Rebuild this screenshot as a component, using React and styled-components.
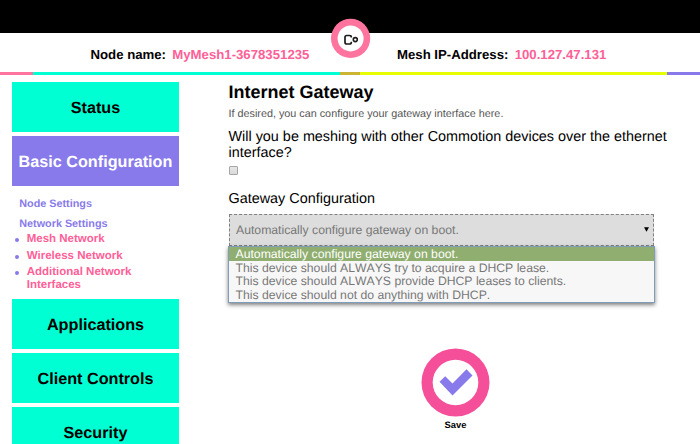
import React from "react";
import styled, { createGlobalStyle } from "styled-components";

const teal = "#00ffd2";
const violet = "#887aeb";
const pink = "#ff6097";

const GlobalStyle = createGlobalStyle`
  * { box-sizing: border-box; }
  body {
    margin: 0;
    background: #fff;
    color: #000;
    font-family: "Liberation Sans", Arial, sans-serif;
    text-rendering: geometricPrecision;
    font-kerning: none;
  }
`;

const Page = styled.div`
  width: 700px;
  height: 444px;
  overflow: hidden;
  display: flex;
  flex-direction: column;
`;

const Header = styled.header`
  position: relative;
  flex: none;
  height: 72px;
  border-top: 33px solid #000;
  display: flex;
`;

const Logo = styled.svg`
  position: absolute;
  left: 330px;
  top: -15px;
`;

const Fact = styled.div`
  width: ${(p) => p.$width}px;
  padding: 14px 0 0 ${(p) => p.$indent}px;
  display: flex;
  gap: 6.3px;
  font-size: 13.2px;
  line-height: 16px;
  font-weight: bold;
  white-space: nowrap;
`;

const FactValue = styled.span`
  color: ${pink};
`;

const Stripe = styled.div`
  flex: none;
  height: 3px;
  display: grid;
  grid-template-columns: 33.3px 306.4px 20.3px 307px 1fr;
`;

const Band = styled.div`
  background: ${(p) => p.$color};
`;

const Columns = styled.div`
  flex: 1;
  min-height: 0;
  display: flex;
  align-items: flex-start;
  padding: 7px 0 0 12px;
`;

const Menu = styled.nav`
  width: 167px;
  display: flex;
  flex-direction: column;
  gap: 4px;
`;

const MenuButton = styled.a`
  height: 50px;
  display: flex;
  align-items: center;
  justify-content: center;
  padding-top: 3px;
  background: ${(p) => (p.$active ? violet : teal)};
  color: ${(p) => (p.$active ? "#fff" : "#000")};
  font-size: 16.2px;
  font-weight: bold;
  white-space: nowrap;
`;

const SubMenu = styled.div`
  height: 105px;
  padding: 8px 0 0 7.3px;
  display: flex;
  flex-direction: column;
  color: ${violet};
  font-weight: bold;
`;

const SubLink = styled.a`
  font-size: 10.8px;
  line-height: 12px;
  margin-bottom: ${(p) => p.$gap || 0}px;
`;

const SubList = styled.ul`
  list-style: none;
  margin: 3px 0 0 -4.3px;
  padding: 0;
  font-size: 11.5px;
  line-height: 13.4px;
`;

const SubItem = styled.li`
  display: flex;
  gap: 7.7px;
  margin-bottom: 3.1px;
  color: ${pink};

  &::before {
    content: "";
    flex: none;
    width: 4px;
    height: 4px;
    margin-top: 5px;
    border-radius: 50%;
    background: ${violet};
  }
`;

const Content = styled.main`
  width: 425px;
  margin-left: 49.5px;
  display: flex;
  flex-direction: column;
`;

const Title = styled.h1`
  margin: 0;
  font-size: 18px;
  line-height: 20px;
`;

const Description = styled.p`
  margin: 5px 0 0;
  font-size: 10.8px;
  line-height: 14px;
  color: #555;
`;

const Label = styled.label`
  margin-top: ${(p) => p.$top}px;
  width: 445px;
  font-size: 14.4px;
  line-height: 16px;
`;

const CheckBox = styled.span`
  width: 9px;
  height: 9px;
  margin-top: 5px;
  border: 1px solid #a6a6a6;
  border-radius: 1px;
  background: linear-gradient(#e6e6e6, #dadada);
`;

const Select = styled.div`
  height: 32px;
  margin-top: 7px;
  padding: 0 4px 1px 6.5px;
  display: flex;
  align-items: center;
  justify-content: space-between;
  border: 1px dashed #808080;
  background: #ddd;
  color: #777;
  font-size: 12.22px;
`;

const Options = styled.div`
  height: 57px;
  width: 427px;
  margin-left: -0.5px;
  border: 1px solid #7f9db9;
  background: #f7f7f7;
  box-shadow: 0 2px 4px rgba(0, 0, 0, 0.5);
`;

const Option = styled.div`
  height: 13.7px;
  padding-left: 6.5px;
  font-size: 12.22px;
  line-height: 14px;
  background: ${(p) => (p.$selected ? "#8fae70" : "transparent")};
  color: ${(p) => (p.$selected ? "#fff" : "#777")};
`;

const SaveButton = styled.div`
  align-self: center;
  margin: 45px 0 0 29px;
  display: flex;
  flex-direction: column;
  align-items: center;
  gap: 2px;
  font-size: 9.4px;
  line-height: 12px;
  font-weight: bold;
`;

const bands = ["#ff739f", teal, "#ccb433", "#e6ff00", violet];
const options = [
  "Automatically configure gateway on boot.",
  "This device should ALWAYS try to acquire a DHCP lease.",
  "This device should ALWAYS provide DHCP leases to clients.",
  "This device should not do anything with DHCP.",
];

export default function App() {
  return (
    <>
      <GlobalStyle />
      <Page>
        <Header>
          <Fact $width={397} $indent={90.5}>
            <span>Node name:</span>
            <FactValue>MyMesh1-3678351235</FactValue>
          </Fact>
          <Fact $width={303} $indent={0}>
            <span>Mesh IP-Address:</span>
            <FactValue>100.127.47.131</FactValue>
          </Fact>
          <Logo width="41" height="41" viewBox="0 0 41 41">
            <circle cx="20.6" cy="20.4" r="19.6" fill="#ff739f" />
            <circle cx="20.6" cy="20.4" r="13" fill="#fff" />
            <path
              d="M21.3 19.6V19q0-1.5-1.8-1.5h-2.7q-1.8 0-1.8 1.8v4.9q0 1.8 1.8 1.8h2.7q1.8 0 1.8-1.5v-.8"
              fill="none"
              stroke="#1c1c1c"
              strokeWidth="1.7"
            />
            <circle cx="25.3" cy="21.6" r="2" fill="none" stroke="#1c1c1c" strokeWidth="1.6" />
          </Logo>
        </Header>
        <Stripe>
          {bands.map((color) => (
            <Band key={color} $color={color} />
          ))}
        </Stripe>
        <Columns>
          <Menu>
            <MenuButton>Status</MenuButton>
            <MenuButton $active>Basic Configuration</MenuButton>
            <SubMenu>
              <SubLink $gap={8}>Node Settings</SubLink>
              <SubLink>Network Settings</SubLink>
              <SubList>
                <SubItem>Mesh Network</SubItem>
                <SubItem>Wireless Network</SubItem>
                <SubItem>
                  <span>
                    Additional Network
                    <br />
                    Interfaces
                  </span>
                </SubItem>
              </SubList>
            </SubMenu>
            <MenuButton>Applications</MenuButton>
            <MenuButton>Client Controls</MenuButton>
            <MenuButton>Security</MenuButton>
          </Menu>
          <Content>
            <Title>Internet Gateway</Title>
            <Description>If desired, you can configure your gateway interface here.</Description>
            <Label $top={8}>
              Will you be meshing with other Commotion devices over the ethernet interface?
            </Label>
            <CheckBox />
            <Label $top={16}>Gateway Configuration</Label>
            <Select>
              <span>{options[0]}</span>
              <svg width="5" height="5" viewBox="0 0 5 5">
                <path d="M0 0.3H5L2.5 4.8Z" fill="#000" />
              </svg>
            </Select>
            <Options>
              {options.map((text, i) => (
                <Option key={text} $selected={i === 0}>
                  {text}
                </Option>
              ))}
            </Options>
            <SaveButton>
              <svg width="69" height="69" viewBox="0 0 69 69">
                <circle cx="34.5" cy="34.5" r="34" fill="#f54f9a" />
                <circle cx="34.5" cy="34.5" r="22.8" fill="#fff" />
                <path d="M18.5 33.8L24.2 28.2L31.5 35.5L45.5 21.2L51.5 27.5L31.5 47.5Z" fill={violet} />
              </svg>
              Save
            </SaveButton>
          </Content>
        </Columns>
      </Page>
    </>
  );
}
